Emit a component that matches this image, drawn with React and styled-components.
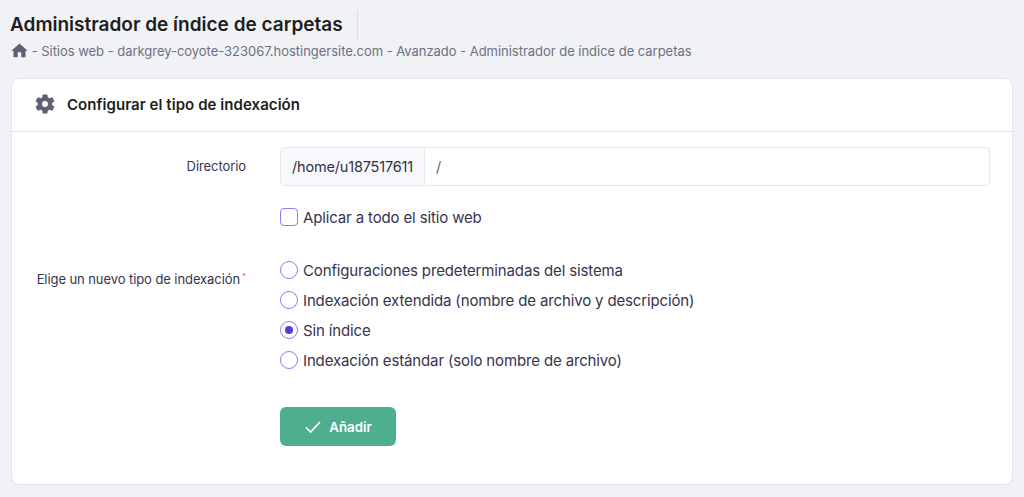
import React from "react";
import styled, { createGlobalStyle } from "styled-components";

const Global = createGlobalStyle`
  html, body { margin: 0; padding: 0; background: #f1f2f6; }
  body { font-family: "Inter", "Noto Sans", sans-serif; color: #1d1e20; }
  * { box-sizing: border-box; }
`;

const Page = styled.div`
  width: 1024px;
  height: 497px;
  overflow: hidden;
  padding: 10px 11px 12px 11px;
  display: flex;
  flex-direction: column;
`;
const TitleRow = styled.div`
  display: flex;
  align-items: stretch;
  height: 30px;
`;
const Title = styled.h1`
  margin: 0 0 0 -1px;
  padding-right: 14px;
  border-right: 1px solid #dadce0;
  font-size: 19px;
  font-weight: 600;
  line-height: 30px;
  color: #1d1e20;
`;
const Crumbs = styled.div`
  display: flex;
  align-items: center;
  height: 22px;
  font-size: 13px;
  letter-spacing: -0.03px;
  color: #6d7081;
  white-space: pre;
`;
const Home = styled.svg`
  width: 17px;
  height: 17px;
  margin: 0 0 2px 0;
  fill: #5e6175;
`;
const Card = styled.section`
  margin-top: 16px;
  flex: 1;
  background: #fff;
  border: 1px solid #e3e5ea;
  border-radius: 8px;
`;
const CardHead = styled.header`
  height: 53px;
  display: flex;
  align-items: center;
  gap: 10px;
  padding: 0 0 2px 21px;
  border-bottom: 1px solid #e3e5ea;
`;
const Gear = styled.svg`
  width: 24px;
  height: 24px;
  fill: #5e6175;
`;
const CardTitle = styled.h2`
  margin: 0;
  font-size: 15px;
  font-weight: 600;
  letter-spacing: 0.06px;
  color: #1d1e20;
`;
const Form = styled.div`
  display: grid;
  grid-template-columns: 234px 710px;
  column-gap: 34px;
  padding-top: 15px;
`;
const Label = styled.div`
  font-size: 13px;
  line-height: 16px;
  letter-spacing: -0.08px;
  color: #36344d;
  text-align: right;
  align-self: ${(p) => (p.$top ? "start" : "center")};
  margin-top: ${(p) => p.$top || 0}px;
  margin-bottom: ${(p) => (p.$top ? 0 : 1)}px;
`;
const Star = styled.sup`
  color: #fc5185;
  font-size: 8px;
  line-height: 0;
  margin-left: 2px;
`;
const InputGroup = styled.div`
  height: 39px;
  display: flex;
  border: 1.5px solid #e6e8ed;
  border-radius: 4px;
  overflow: hidden;
  font-size: 14.5px;
  letter-spacing: -0.18px;
`;
const Prefix = styled.div`
  width: 144px;
  display: flex;
  align-items: center;
  padding-left: 11px;
  background: #f7f8fc;
  border-right: 1px solid #e6e8ed;
  color: #2f3148;
`;
const Value = styled.div`
  flex: 1;
  display: flex;
  align-items: center;
  padding-left: 11px;
  color: #5e6175;
`;
const CheckRow = styled.label`
  grid-column: 2;
  display: flex;
  align-items: center;
  gap: 5px;
  height: 18px;
  margin-top: 22px;
  font-size: 15px;
  letter-spacing: -0.14px;
  color: #36344d;
`;
const Box = styled.span`
  width: 18px;
  height: 18px;
  border: 1.5px solid #9279f3;
  border-radius: 4px;
  background: #fff;
`;
const Radios = styled.div`
  display: flex;
  flex-direction: column;
  gap: 12px;
  margin-top: 35px;
`;
const RadioRow = styled.label`
  display: flex;
  align-items: center;
  gap: 5px;
  height: 18px;
  font-size: 15px;
  letter-spacing: -0.14px;
  color: #36344d;
  white-space: nowrap;
`;
const Dot = styled.span`
  width: 18px;
  height: 18px;
  border-radius: 50%;
  border: 1.5px solid #9279f3;
  display: flex;
  align-items: center;
  justify-content: center;
  &::after {
    content: "";
    display: ${(p) => (p.$on ? "block" : "none")};
    width: 8px;
    height: 8px;
    border-radius: 50%;
    background: #5b39d6;
  }
`;
const Button = styled.button`
  grid-column: 2;
  justify-self: start;
  width: 116px;
  height: 39px;
  margin-top: 38px;
  display: flex;
  align-items: center;
  justify-content: center;
  gap: 7px;
  border: none;
  border-radius: 6px;
  background: #4fae90;
  color: #fff;
  font-family: inherit;
  font-size: 13.3px;
  font-weight: 600;
  padding: 0;
`;

const options = [
  ["Configuraciones predeterminadas del sistema", false],
  ["Indexación extendida (nombre de archivo y descripción)", false],
  ["Sin índice", true],
  ["Indexación estándar (solo nombre de archivo)", false],
];

export default function App() {
  return (
    <Page>
      <Global />
      <TitleRow>
        <Title>Administrador de índice de carpetas</Title>
      </TitleRow>
      <Crumbs>
        <Home viewBox="0 0 24 24"><path d="M9.5 21.5v-7h5v7h6v-9h3L12 2 .5 12.5h3v9z" /></Home>
        {" - Sitios web - darkgrey-coyote-323067.hostingersite.com - Avanzado - Administrador de índice de carpetas"}
      </Crumbs>
      <Card>
        <CardHead>
          <Gear viewBox="0 0 24 24"><path d="M19.14 12.94c.04-.3.06-.61.06-.94s-.02-.64-.07-.94l2.03-1.58a.49.49 0 0 0 .12-.61l-1.92-3.32a.49.49 0 0 0-.59-.22l-2.39.96a7 7 0 0 0-1.62-.94l-.36-2.54a.48.48 0 0 0-.48-.41h-3.84a.47.47 0 0 0-.47.41l-.36 2.54c-.59.24-1.13.57-1.62.94l-2.39-.96a.48.48 0 0 0-.59.22L2.74 8.87a.47.47 0 0 0 .12.61l2.03 1.58c-.05.3-.09.63-.09.94s.02.64.07.94l-2.03 1.58a.49.49 0 0 0-.12.61l1.92 3.32c.12.22.37.29.59.22l2.39-.96c.5.38 1.03.7 1.62.94l.36 2.54c.05.24.24.41.48.41h3.84c.24 0 .44-.17.47-.41l.36-2.54a7 7 0 0 0 1.62-.94l2.39.96c.22.08.47 0 .59-.22l1.92-3.32a.47.47 0 0 0-.12-.61zM12 14.9A2.9 2.9 0 1 1 12 9.1a2.9 2.9 0 0 1 0 5.8z" /></Gear>
          <CardTitle>Configurar el tipo de indexación</CardTitle>
        </CardHead>
        <Form>
          <Label>Directorio</Label>
          <InputGroup>
            <Prefix>/home/u187517611</Prefix>
            <Value>/</Value>
          </InputGroup>
          <CheckRow><Box />Aplicar a todo el sitio web</CheckRow>
          <Label $top={45}>Elige un nuevo tipo de indexación<Star>*</Star></Label>
          <Radios>
            {options.map(([t, on]) => (
              <RadioRow key={t}><Dot $on={on} />{t}</RadioRow>
            ))}
          </Radios>
          <Button>
            <svg width="18" height="14" viewBox="0 0 18 14" fill="none" stroke="#fff" strokeWidth="1.6"><path d="M2 7.5l4.6 4.5L16 2" /></svg>
            Añadir
          </Button>
        </Form>
      </Card>
    </Page>
  );
}
